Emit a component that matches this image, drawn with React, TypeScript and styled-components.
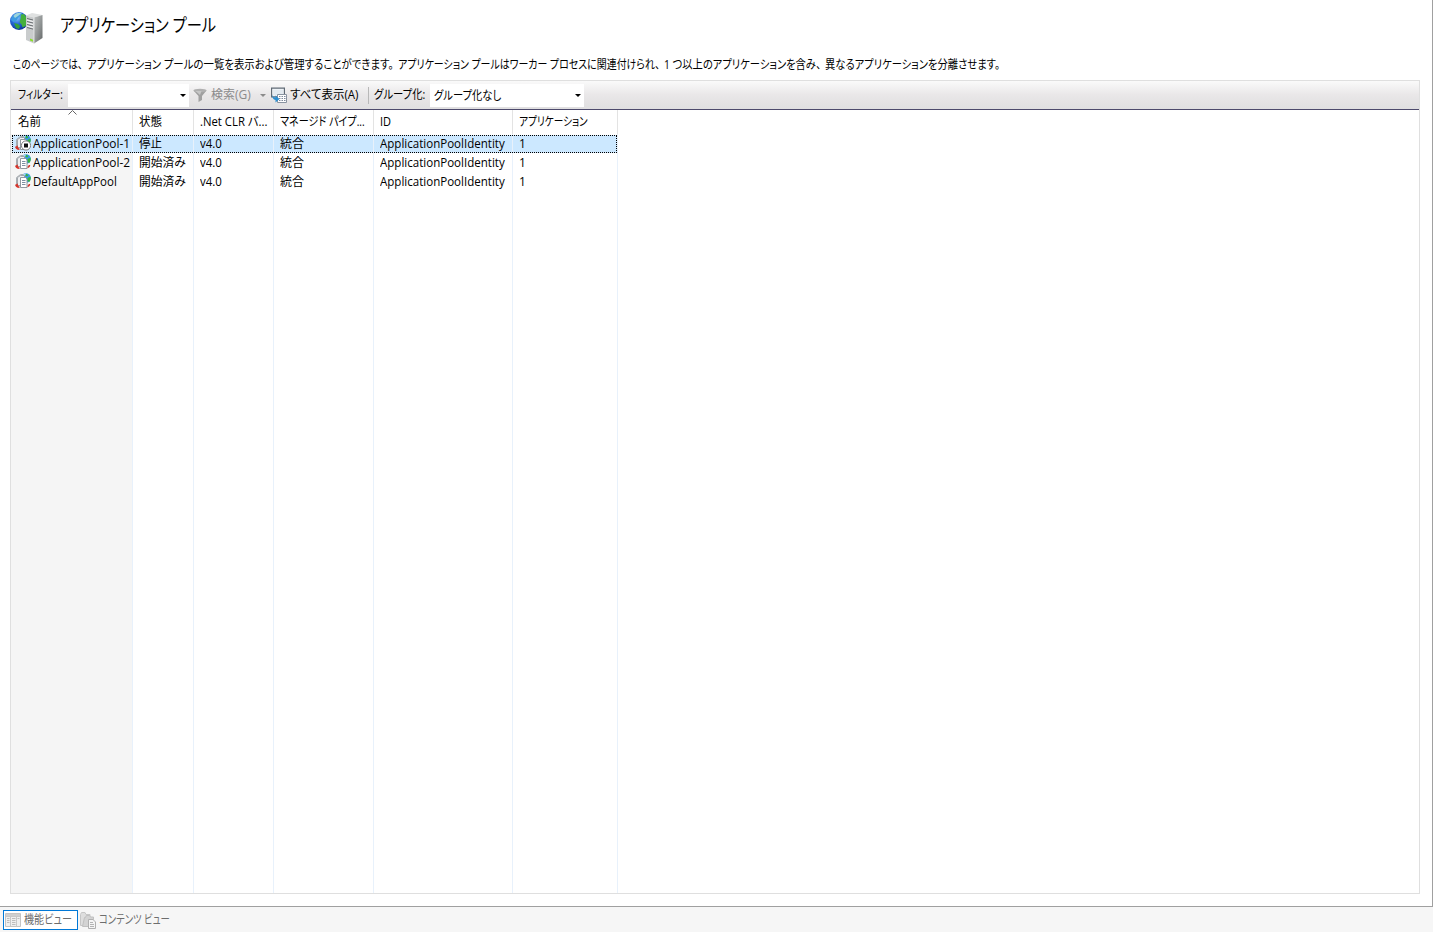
import { ReactNode, useLayoutEffect, useRef, useState } from "react"
import styled, { createGlobalStyle } from "styled-components"


type Pool = {
  name: string
  status: string
  stopped?: boolean
  statusWidth: number
  nameWidth: number
}

const pools: Pool[] = [
  { name: 'ApplicationPool-1', status: '停止', stopped: true, statusWidth: 23, nameWidth: 97 },
  { name: 'ApplicationPool-2', status: '開始済み', statusWidth: 47, nameWidth: 97 },
  { name: 'DefaultAppPool', status: '開始済み', statusWidth: 47, nameWidth: 84 },
]

const headers = [
  { title: '名前', width: 23, sorted: true },
  { title: '状態', width: 23 },
  { title: '.Net CLR バ...', width: 67 },
  { title: 'マネージド パイプ...', width: 85 },
  { title: 'ID', width: 11 },
  { title: 'アプリケーション', width: 69 },
]

// Condenses a label to the width of the native UI font
const Fit = ({ width, children }: { width: number, children: ReactNode }) => {
  const ref = useRef<HTMLSpanElement>(null)
  const [scale, setScale] = useState<number>(1)

  useLayoutEffect(() => {
    if (ref.current) {
      setScale(width / ref.current.offsetWidth)
    }
  }, [width, children])

  return (
    <FitBox $width={width}>
      <FitText ref={ref} style={{ transform: `scaleX(${scale})` }}>{children}</FitText>
    </FitBox>
  )
}

const ServerIcon = () => (
  <svg width="34" height="34" viewBox="0 0 34 34">
    <defs>
      <radialGradient id="globe" cx="0.38" cy="0.3" r="0.75">
        <stop offset="0" stopColor="#8fd0ff" />
        <stop offset="0.5" stopColor="#2466d6" />
        <stop offset="1" stopColor="#0c2f90" />
      </radialGradient>
      <linearGradient id="side" x1="0" y1="0" x2="1" y2="1">
        <stop offset="0" stopColor="#bdc0c0" />
        <stop offset="0.5" stopColor="#949898" />
        <stop offset="1" stopColor="#606464" />
      </linearGradient>
    </defs>
    <circle cx="9" cy="11" r="9" fill="url(#globe)" />
    <path d="M2 7 5 4l5-1.500 2 1-2 2.500L8 8 6.500 10.500 3.500 12 1 10z" fill="#3d9be0" />
    <path d="M11 4.500l3-.5 3 4 .6 4-2 4-3 1.500-1-3-2-2 1-4z" fill="#45b03c" />
    <path d="M4 13l4 1 2 2-1 3-3-1z" fill="#35a03a" />
    <path d="M3.500 6q3-4 8-3L8 6 5 8z" fill="#bfe8d8" opacity=".75" />
    <path d="M16 5.500 22 3l10.500 2L24 7.500z" fill="#dfe1e1" />
    <path d="M16 5.500 24 7.500V33.500l-8-3.500z" fill="#c9cccd" />
    <path d="M24 7.500 32.500 5v23L24 33.500z" fill="url(#side)" />
    <path d="M17 8.500l6 1.500M17 11.500l6 1.500M17 14.500l6 1.500M17 17.500l6 1.600" stroke="#686d70" strokeWidth="1" />
    <path d="M17 10l6 1.500M17 13l6 1.500M17 16l6 1.500" stroke="#fff" strokeWidth=".8" />
    <path d="M24 7.500V33.500" stroke="#eceeee" strokeWidth=".8" />
    <path d="M20 28.500l3 1.200v2l-3-1.200z" fill="#8be02a" />
  </svg>
)

const PoolIcon = ({ stopped }: { stopped?: boolean }) => (
  <svg width="16" height="16" viewBox="0 0 16 16">
    <circle cx="11" cy="5" r="4.800" fill="#3c9ae8" />
    <path d="M6.500 4Q7 .5 11 .5L10 3z" fill="#a9def8" />
    <path d="M11 .7l2.500 1.300L12 3.500 10.500 3zM12.500 5l3-1.500q.8 3-1.200 5.500L12.500 8z" fill="#35b53c" />
    <path d="M1.500 12.500V4.500L5.500 1.500h3" fill="none" stroke="#a7adb2" />
    <path d="M2.500 12.500V4.500l3-2h4v10z" fill="#eef0f2" stroke="#8f969c" strokeWidth=".8" />
    <path d="M1 11.500q0 2.500 3.500 2.700M12.500 13.500q2-.5 2-2.500" fill="none" stroke="#d5352c" strokeWidth="1.600" />
    <path d="M.3 12.500 2.500 10.300l1 3z" fill="#d5352c" />
    <path d="M5.500 4.500h5l1.500 1.500v8.500H5.500z" fill="#fff" stroke="#868d95" strokeWidth=".9" />
    <path d="M7 7.500h3.500M7 9.500h3.500M7 11.500h3.500" stroke="#6f8296" strokeWidth=".9" />
    {stopped && (
      <>
        <circle cx="11" cy="10.500" r="4.600" fill="#fff" stroke="#7d7d7d" />
        <path d="M9 8.500h4v4H9z" fill="#111" />
      </>
    )}
  </svg>
)

const FunnelIcon = () => (
  <svg width="14" height="14" viewBox="0 0 14 14">
    <path d="M.5 2.500h13L9 8v4L5.500 14V8z" fill="#a0a0a0" />
    <ellipse cx="7" cy="2.500" rx="6.500" ry="1.700" fill="#b0b0b0" />
    <path d="M2.500 3h6L7 7z" fill="#c6c6c6" />
  </svg>
)

const ShowAllIcon = () => (
  <svg width="16" height="16" viewBox="0 0 16 16">
    <path d="M.6 1.100h12.800v8.800H.6z" fill="#f7f9fb" stroke="#5f6a75" strokeWidth="1.200" />
    <path d="M2 2.500h10v6H2z" fill="#e3eaf0" />
    <path d="M6.500 7.500h9v8h-9z" fill="#fff" stroke="#8993a0" />
    <path d="M8 9.500h6.500M8 11.500h6.500M8 13.500h6.500" stroke="#7f8a9c" strokeDasharray="1.500 1" />
    <path d="M1 7Q1.500 10.500 4.500 10.500V8.500l4 3.500-4 3.500V13Q1 12.500 1 7z" fill="#2b8ed0" />
  </svg>
)

const FeaturesIcon = () => (
  <svg width="16" height="16" viewBox="0 0 16 16">
    <path d="M.5 1.500h15v13H.5z" fill="#efefef" stroke="#c4c4c4" />
    <path d="M1 2h14v2H1z" fill="#cfcfcf" />
    <path d="M5.500 5v9.500M11.500 5v9.500M1 4.500h14" stroke="#c8c8c8" />
    <path d="M2 6.500h2.500M2 8.500h2.500M2 10.500h2.500M7 6.500h3.500M7 8.500h3.500M7 10.500h3.500M7 12.500h3.500M12.500 6.500h2" stroke="#bdbdbd" />
  </svg>
)

const ContentIcon = () => (
  <svg width="16" height="17" viewBox="0 0 16 17">
    <path d="M.5 13.500v-11l1-2h3.500l1 2h4v11z" fill="#dedede" stroke="#c6c6c6" />
    <path d="M2.500 14.500l2-9h1l.8-2h3.200l1 1.500h3v9.500z" fill="#d3d3d3" stroke="#c0c0c0" />
    <path d="M8.500 7.500h4.500l2.500 2.500v6.500h-7z" fill="#f5f5f5" stroke="#b0b0b0" />
    <path d="M10 10.500h3M10 12.500h4M10 14.500h4" stroke="#b3b3b3" />
  </svg>
)

const DownArrow = ({ muted }: { muted?: boolean }) => (
  <svg width="6" height="3" viewBox="0 0 6 3">
    <path d="M0 0h6L3 3z" fill={muted ? '#8b8b8b' : '#000'} />
  </svg>
)


export default function App() {
  return (
    <>
      <GlobalStyle />
      <Window>
        <Page>
          <TitleBar>
            <ServerIcon />
            <Title><Fit width={156}>アプリケーション プール</Fit></Title>
          </TitleBar>

          <Description>
            <Fit width={70}>このページでは、</Fit>
            <Fit width={307}>アプリケーション プールの一覧を表示および管理することができます。</Fit>
            <Fit width={262}>アプリケーション プールはワーカー プロセスに関連付けられ、</Fit>
            <Fit width={157}>1 つ以上のアプリケーションを含み、</Fit>
            <Fit width={175}>異なるアプリケーションを分離させます。</Fit>
          </Description>

          <Panel>
            <Toolbar>
              <ToolLabel $width={57}><Fit width={45}>フィルター:</Fit></ToolLabel>
              <Combo $width={121}><DownArrow /></Combo>
              <ToolButton $width={77} $muted>
                <FunnelIcon />
                <Fit width={40}>検索(G)</Fit>
                <DownArrow muted />
              </ToolButton>
              <ToolButton $width={93}>
                <ShowAllIcon />
                <Fit width={69}>すべて表示(A)</Fit>
              </ToolButton>
              <Separator />
              <GroupLabel><Fit width={51}>グループ化:</Fit></GroupLabel>
              <Combo $width={154}><Fit width={67}>グループ化なし</Fit><DownArrow /></Combo>
            </Toolbar>

            <Grid>
              {headers.map(h => (
                <HeaderCell key={h.title} $sorted={h.sorted}>
                  {h.sorted && (
                    <SortMark width="9" height="5" viewBox="0 0 9 5">
                      <path d="M.5 4.500l4-4 4 4" fill="none" stroke="#666" />
                    </SortMark>
                  )}
                  <Fit width={h.width}>{h.title}</Fit>
                </HeaderCell>
              ))}
            </Grid>

            <ListArea>
              {pools.map(p => (
                <Row key={p.name} $selected={p.stopped}>
                  <NameCell>
                    <PoolIcon stopped={p.stopped} />
                    <Fit width={p.nameWidth}>{p.name}</Fit>
                  </NameCell>
                  <Cell><Fit width={p.statusWidth}>{p.status}</Fit></Cell>
                  <Cell><Fit width={22}>v4.0</Fit></Cell>
                  <Cell><Fit width={24}>統合</Fit></Cell>
                  <Cell><Fit width={125}>ApplicationPoolIdentity</Fit></Cell>
                  <Cell>1</Cell>
                </Row>
              ))}
              <EmptyRow>
                {headers.map((h, i) => <EmptyCell key={h.title} $sorted={i === 0} />)}
              </EmptyRow>
            </ListArea>
          </Panel>
        </Page>

        <Footer>
          <ViewTab $active $width={75}>
            <FeaturesIcon />
            <Fit width={48}>機能ビュー</Fit>
          </ViewTab>
          <ViewTab $width={94}>
            <ContentIcon />
            <Fit width={71}>コンテンツ ビュー</Fit>
          </ViewTab>
        </Footer>
      </Window>
    </>
  )
}


const GlobalStyle = createGlobalStyle`
  *, *::after {
    box-sizing: border-box;
  }
  body {
    margin: 0;
    background: #f6f6f6;
    color: #000;
    font: 12px/18px "Open Sans", "Noto Sans CJK JP", sans-serif;
    overflow: hidden;
  }
  svg {
    display: block;
    flex: none;
  }
`
const columns = '122px 61px 80px 100px 139px 105px'

const Window = styled.div`
  display: flex;
  flex-direction: column;
  width: 1433px;
  height: 932px;
`
const Page = styled.main`
  display: flex;
  flex-direction: column;
  height: 907px;
  padding: 10px 12px 12px 10px;
  background: #fff;
  border-right: 1px solid #a0a0a0;
  border-bottom: 1px solid #a0a0a0;
`
const FitBox = styled.span<{ $width: number }>`
  display: block;
  flex: none;
  width: ${p => p.$width}px;
  white-space: nowrap;
`
const FitText = styled.span`
  display: inline-block;
  transform-origin: 0 50%;
  font-feature-settings: "palt";
`
const TitleBar = styled.header`
  display: flex;
  height: 44px;
  gap: 16px;
`
const Title = styled.h1`
  margin: 0;
  font-size: 18px;
  line-height: 30px;
  font-weight: 400;
`
const Description = styled.div`
  display: flex;
  gap: 4px;
  height: 26px;
  padding: 2px 0 0 3px;
`
const Panel = styled.section`
  flex: 1;
  display: flex;
  flex-direction: column;
  border: 1px solid #dfdfdf;
`
const Toolbar = styled.div`
  display: flex;
  align-items: center;
  height: 29px;
  background: linear-gradient(#fafafa, #e9e7e8 50%, #e0dfe0);
  border-bottom: 1px solid #4d4a6c;
`
const ToolLabel = styled.label<{ $width: number }>`
  width: ${p => p.$width}px;
  padding-left: 7px;
`
const Combo = styled.div<{ $width: number }>`
  display: flex;
  align-items: center;
  width: ${p => p.$width}px;
  height: 23px;
  padding: 1px 3px 0 4px;
  background: #fff;

  & > svg {
    margin-left: auto;
  }
`
const ToolButton = styled.div<{ $width: number, $muted?: boolean }>`
  display: flex;
  align-items: center;
  gap: ${p => p.$muted ? 4 : 3}px;
  width: ${p => p.$width}px;
  padding-left: ${p => p.$muted ? 4 : 5}px;
  color: ${p => p.$muted ? '#8b8b8b' : '#000'};

  & > svg:last-child {
    margin-left: 5px;
  }
`
const Separator = styled.i`
  width: 1px;
  height: 17px;
  margin-left: 9px;
  background: #b8b8b8;
`
const GroupLabel = styled.label`
  width: 61px;
  padding-left: 5px;
`
const Grid = styled.div`
  display: grid;
  grid-template-columns: ${columns};
  height: 24px;
`
const HeaderCell = styled.div<{ $sorted?: boolean }>`
  position: relative;
  padding: 3px 0 0 ${p => p.$sorted ? 7 : 6}px;
  border-right: 1px solid #e3e3e3;
`
const SortMark = styled.svg`
  position: absolute;
  top: 0;
  left: 57px;
`
const ListArea = styled.div`
  flex: 1;
  display: flex;
  flex-direction: column;
`
const Cell = styled.div`
  padding: 1px 0 0 6px;
  border-right: 1px solid #e8f1fb;
`
const NameCell = styled(Cell)`
  display: flex;
  gap: 2px;
  padding-left: 4px;
  background: #f5f5f5;
`
const Row = styled.div<{ $selected?: boolean }>`
  position: relative;
  display: grid;
  grid-template-columns: ${columns};
  height: 19px;

  ${p => p.$selected && `
    ${Cell} {
      background: linear-gradient(#cce8ff, #cce8ff) 0 1px no-repeat;
    }
    ${NameCell} {
      background: linear-gradient(#cce8ff, #cce8ff) 1px 1px no-repeat #f5f5f5;
    }
    &::after {
      content: "";
      position: absolute;
      inset: 1px auto 0 1px;
      width: 605px;
      border: 1px dotted #000;
    }
  `}
`
const EmptyRow = styled.div`
  flex: 1;
  display: grid;
  grid-template-columns: ${columns};
`
const EmptyCell = styled.div<{ $sorted: boolean }>`
  background: ${p => p.$sorted ? '#f5f5f5' : '#fff'};
  border-right: 1px solid #e8f1fb;
`
const Footer = styled.footer`
  display: flex;
  height: 25px;
  padding: 3px;
  color: #6d6d6d;
`
const ViewTab = styled.div<{ $width: number, $active?: boolean }>`
  display: flex;
  align-items: center;
  gap: 3px;
  width: ${p => p.$width}px;
  height: 20px;
  padding-left: 1px;
  border: 1px solid ${p => p.$active ? '#0078d7' : 'transparent'};
  background: ${p => p.$active ? '#fff' : 'transparent'};
`
